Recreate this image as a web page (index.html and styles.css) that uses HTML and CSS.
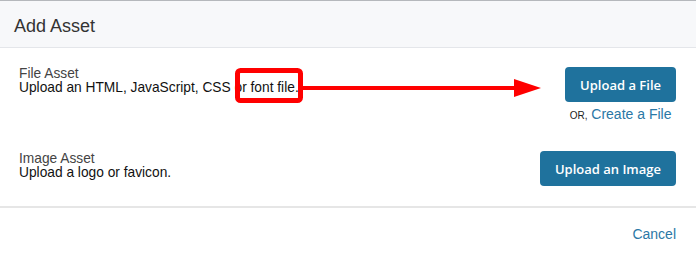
FILE: index.html
```html
<!DOCTYPE html>
<html>
<head>
<meta charset="utf-8">
<link rel="stylesheet" href="styles.css">
</head>
<body>
<div class="modal">
  <div class="modal-header">
    <h1 class="modal-title">Add Asset</h1>
  </div>
  <div class="modal-body">
    <div class="asset-row">
      <div class="asset-info">
        <div class="asset-name">File Asset</div>
        <div class="asset-desc">Upload an HTML, JavaScript, CSS or font file.</div>
      </div>
      <div class="asset-actions">
        <button class="btn">Upload a File</button>
        <div class="alt"><span class="or">or,</span> <a class="link" href="#">Create a File</a></div>
      </div>
    </div>
    <div class="asset-row second">
      <div class="asset-info">
        <div class="asset-name">Image Asset</div>
        <div class="asset-desc">Upload a logo or favicon.</div>
      </div>
      <div class="asset-actions">
        <button class="btn">Upload an Image</button>
      </div>
    </div>
  </div>
  <div class="modal-footer">
    <a class="link cancel" href="#">Cancel</a>
  </div>
  <svg class="annotation" width="696" height="259" viewBox="0 0 696 259">
    <rect x="237.5" y="70.5" width="63" height="30" rx="3" fill="none" stroke="#f00" stroke-width="5"/>
    <rect x="303" y="86" width="214" height="4" fill="#f00"/>
    <polygon points="514,79 541,88 514,97" fill="#f00"/>
  </svg>
</div>
</body>
</html>
```
FILE: styles.css
```css
* { box-sizing: border-box; }
body {
  margin: 0;
  background: #fff;
  font-family: "Liberation Sans", Arial, sans-serif;
}
.modal {
  position: relative;
  width: 696px;
  height: 259px;
  border-top: 1px solid #b5b8bc;
}
.modal-header {
  height: 47px;
  background: #f7f8fa;
  border-bottom: 1px solid #e4e6ea;
  display: flex;
  align-items: center;
  padding: 0 14px;
}
.modal-title {
  margin: 0;
  font-size: 18px;
  font-weight: normal;
  color: #333;
  padding-top: 4px;
}
.modal-body {
  padding: 19px 20px 20px 19px;
  border-bottom: 2px solid #e6e6e6;
}
.asset-row {
  display: flex;
  justify-content: space-between;
  align-items: flex-start;
}
.asset-row.second {
  margin-top: 27px;
}
.asset-info {
  font-size: 13.75px;
  line-height: 14px;
}
.second .asset-info { padding-top: 1px; }
.asset-name { color: #444; }
.asset-desc { color: #111; }
.asset-actions {
  display: flex;
  flex-direction: column;
  align-items: center;
}
.btn {
  height: 35px;
  padding: 0 15px;
  border: none;
  border-radius: 4px;
  background: #1f729d;
  color: #fff;
  font-family: "Open Sans", sans-serif;
  font-weight: 600;
  font-size: 13px;
}
.alt {
  margin-top: 4px;
  font-size: 14px;
  line-height: 16px;
  color: #222;
}
.or {
  font-size: 10px;
  text-transform: uppercase;
}
.link {
  color: #2a78a6;
  text-decoration: none;
}
.modal-footer {
  display: flex;
  justify-content: flex-end;
  padding: 18px 20px 0;
  font-size: 14px;
}
.annotation {
  position: absolute;
  left: 0;
  top: -1px;
  pointer-events: none;
}
```
